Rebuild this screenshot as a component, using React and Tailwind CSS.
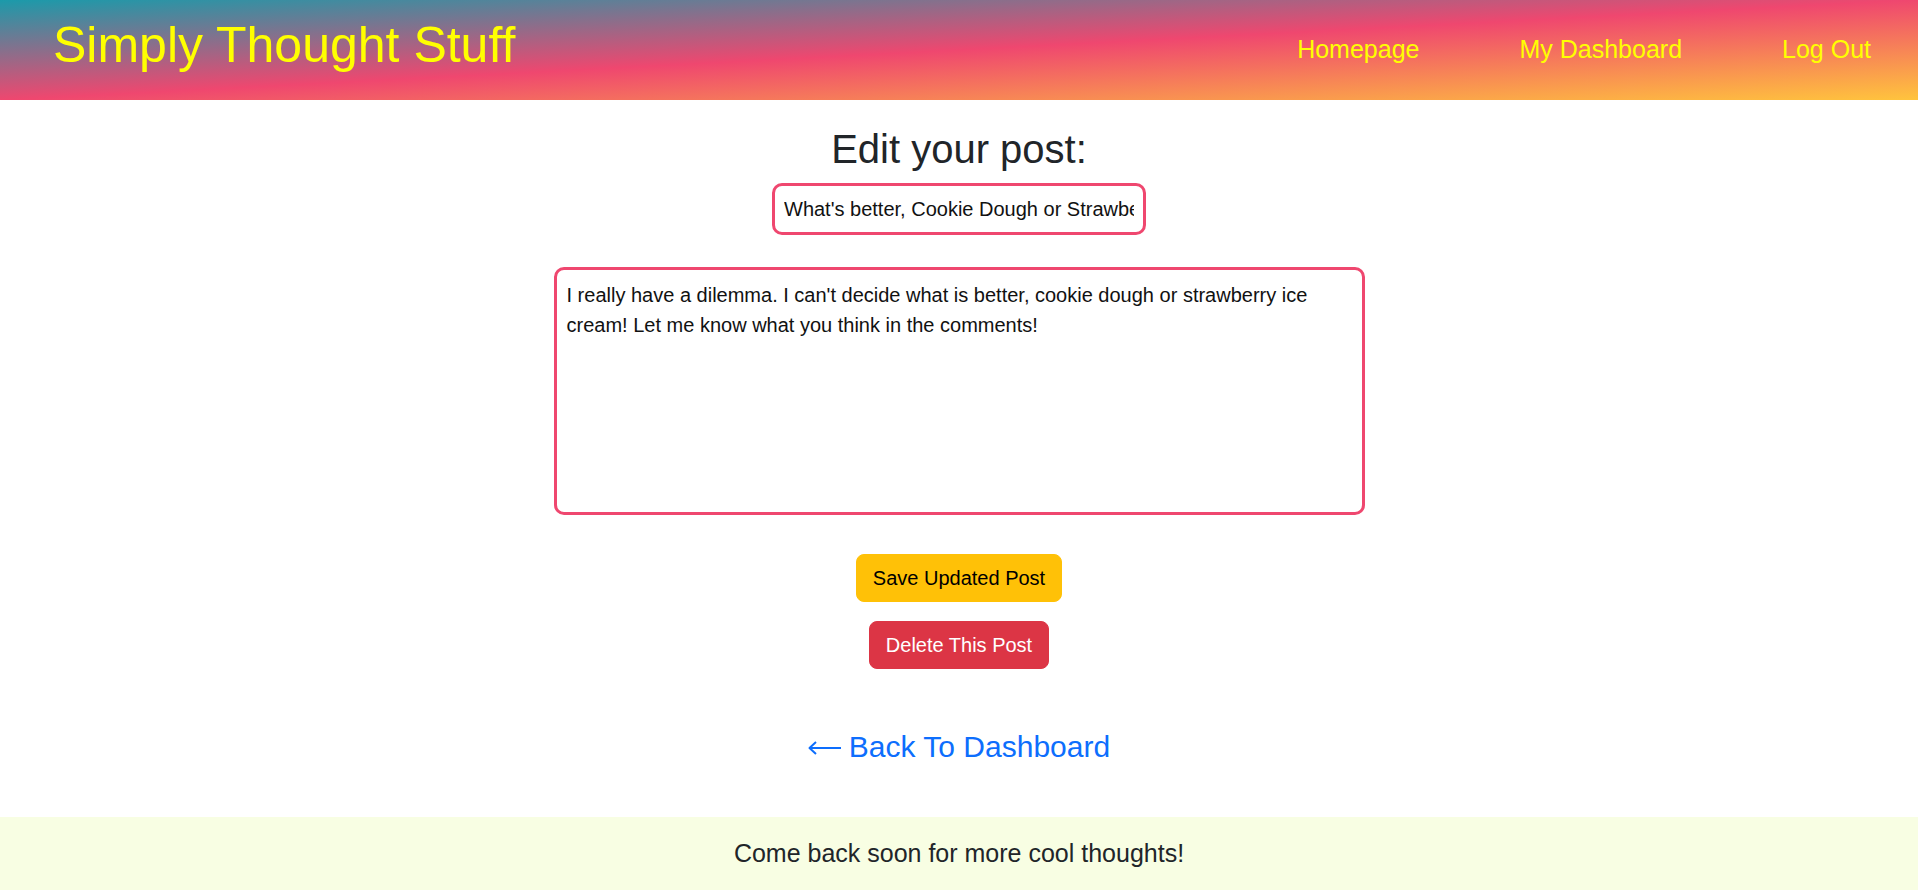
import { useState } from "react";

const post = {
  title: "What's better, Cookie Dough or Strawberry ice cream?",
  body: "I really have a dilemma. I can't decide what is better, cookie dough or strawberry ice cream! Let me know what you think in the comments!",
};

function Header() {
  return (
    <header className="h-[100px] flex items-center justify-between pl-[53px] bg-[linear-gradient(177deg,#1b9aaa,#ef476f,#ffc43d)]">
      <h1 className="text-[50px] leading-[1.2] mb-[10px] text-[#ffff00]">
        Simply Thought Stuff
      </h1>
      <nav className="flex items-center">
        <a href="#" className="px-[50px] text-[25px] leading-[1.5] text-[#ffff00]">
          Homepage
        </a>
        <a href="#" className="px-[50px] text-[25px] leading-[1.5] text-[#ffff00]">
          My Dashboard
        </a>
        <a href="#" className="pl-[50px] pr-[47px] text-[25px] leading-[1.5] text-[#ffff00]">
          Log Out
        </a>
      </nav>
    </header>
  );
}

export default function App() {
  const [title, setTitle] = useState(post.title);
  const [body, setBody] = useState(post.body);

  return (
    <div className="min-h-screen flex flex-col bg-white font-['Liberation_Sans',Arial,sans-serif]">
      <Header />

      <main className="flex-1 flex flex-col items-center pb-[46px]">
        <h2 className="mt-[25px] text-[40px] leading-[1.2] text-[#212529]">
          Edit your post:
        </h2>

        {/* Title input */}
        <input
          value={title}
          onChange={(e) => setTitle(e.target.value)}
          className="mt-[10px] w-[374px] h-[52px] px-[9px] border-[3px] border-[#ef476f] rounded-[10px] text-[20px] leading-[1.5] text-[#111] outline-none bg-white"
        />

        {/* Body */}
        <textarea
          value={body}
          onChange={(e) => setBody(e.target.value)}
          className="mt-[32px] w-[811px] h-[248px] p-[10px] border-[3px] border-[#ef476f] rounded-[10px] text-[20px] leading-[1.5] text-[#111] outline-none resize-none bg-white"
        />

        <button className="mt-[39px] px-[16px] py-[8px] border border-[#ffc107] bg-[#ffc107] rounded-[8px] text-[20px] leading-[1.5] text-black">
          Save Updated Post
        </button>
        <button className="mt-[19px] px-[16px] py-[8px] border border-[#dc3545] bg-[#dc3545] rounded-[8px] text-[20px] leading-[1.5] text-white">
          Delete This Post
        </button>

        <a href="#" className="mt-[55px] flex items-center gap-[8px] text-[30px] leading-[1.5] text-[#0d6efd]">
          <svg width="33" height="14" viewBox="0 0 33 14" fill="none" stroke="#0d6efd" strokeWidth="2" className="mt-[3px]">
            <path d="M33 7H2" />
            <path d="M8 1L1.5 7L8 13" strokeLinejoin="round" />
          </svg>
          <span>Back To Dashboard</span>
        </a>
      </main>

      <footer className="h-[73px] flex items-center justify-center bg-[#f8fee3]">
        <p className="text-[25px] leading-[1.5] text-[#212529]">
          Come back soon for more cool thoughts!
        </p>
      </footer>
    </div>
  );
}
